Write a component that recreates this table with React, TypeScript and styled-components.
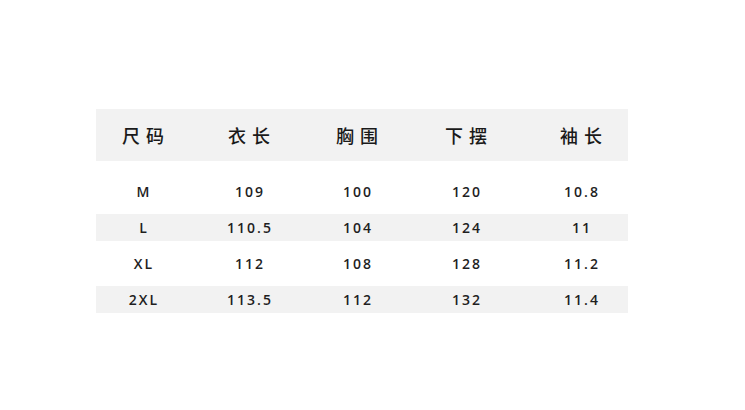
import React from "react";
import styled, { createGlobalStyle } from "styled-components";

const Global = createGlobalStyle`
  html, body { margin: 0; padding: 0; background: #ffffff; }
  body { font-family: "Open Sans", "Noto Sans CJK SC", sans-serif; color: #222; }
`;

const Page = styled.div`
  width: 745px;
  height: 410px;
  padding: 109px 0 0 96px;
  box-sizing: border-box;
`;

const Table = styled.div`
  width: 532px;
  display: flex;
  flex-direction: column;
`;

const cols = "94px 118px 98px 120px 102px";

const Header = styled.div`
  display: grid;
  grid-template-columns: ${cols};
  height: 52px;
  align-items: center;
  background: #f2f2f2;
  margin-bottom: 17px;
`;

const HeadCell = styled.div<{ $shift?: number }>`
  text-align: center;
  font-family: "Noto Sans CJK SC", sans-serif;
  font-size: 18px;
  font-weight: 500;
  letter-spacing: 6px;
  padding-left: ${(p) => 6 + (p.$shift ?? 0)}px;
  color: #1a1a1a;
`;

const Body = styled.div`
  display: flex;
  flex-direction: column;
  gap: 9px;
`;

const Row = styled.div<{ $shaded: boolean }>`
  display: grid;
  grid-template-columns: ${cols};
  height: 27px;
  align-items: center;
  background: ${(p) => (p.$shaded ? "#f2f2f2" : "transparent")};
`;

const Cell = styled.div<{ $shift?: number }>`
  text-align: center;
  font-size: 14px;
  font-weight: 600;
  letter-spacing: 2px;
  padding-left: ${(p) => 2 + (p.$shift ?? 0)}px;
  color: #1f1f1f;
`;

const headers = ["尺码", "衣长", "胸围", "下摆", "袖长"];
const rows = [
  ["M", "109", "100", "120", "10.8"],
  ["L", "110.5", "104", "124", "11"],
  ["XL", "112", "108", "128", "11.2"],
  ["2XL", "113.5", "112", "132", "11.4"],
];

export default function App() {
  return (
    <>
      <Global />
      <Page>
        <Table>
          <Header>
            {headers.map((h, i) => (
              <HeadCell key={h} $shift={i === 4 ? 8 : 0}>
                {h}
              </HeadCell>
            ))}
          </Header>
          <Body>
            {rows.map((r, ri) => (
              <Row key={r[0]} $shaded={ri % 2 === 1}>
                {r.map((c, ci) => (
                  <Cell key={ci} $shift={ci === 4 ? 8 : 0}>
                    {c}
                  </Cell>
                ))}
              </Row>
            ))}
          </Body>
        </Table>
      </Page>
    </>
  );
}
